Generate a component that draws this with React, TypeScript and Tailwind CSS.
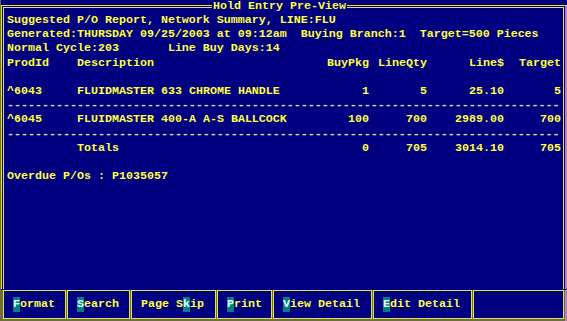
const rows = [
  ['^6043', 'FLUIDMASTER 633 CHROME HANDLE', '1', '5', '25.10', '5'],
  ['^6045', 'FLUIDMASTER 400-A A-S BALLCOCK', '100', '700', '2989.00', '700'],
];

const buttons = [
  { pre: '', key: 'F', post: 'ormat', w: 'w-[63px]' },
  { pre: '', key: 'S', post: 'earch', w: 'w-[63px]' },
  { pre: 'Page S', key: 'k', post: 'ip', w: 'w-[85px]' },
  { pre: '', key: 'P', post: 'rint', w: 'w-[55px]' },
  { pre: '', key: 'V', post: 'iew Detail', w: 'w-[99px]' },
  { pre: '', key: 'E', post: 'dit Detail', w: 'w-[99px]' },
  { pre: '', key: '', post: '', w: 'w-[91px]' },
];

function Row({ cells }: { cells: string[] }) {
  return (
    <div className="grid grid-cols-[70px_240px_52px_58px_77px_57px] whitespace-pre">
      <div>{cells[0]}</div>
      <div>{cells[1]}</div>
      <div className="text-right">{cells[2]}</div>
      <div className="text-right">{cells[3]}</div>
      <div className="text-right">{cells[4]}</div>
      <div className="text-right">{cells[5]}</div>
    </div>
  );
}

function Dashes() {
  return <div className="whitespace-pre text-[#e8e890]">{'-'.repeat(79)}</div>;
}

export default function App() {
  return (
    <div className="w-[567px] h-[321px] bg-[#000080] border-l border-[#6e6e46] flex flex-col overflow-hidden relative font-['Liberation_Mono',monospace] font-bold text-[11.66px] leading-[14.2px] text-[#ffff3c]">
      {/* title on top border */}
      <div className="absolute top-0 left-[211px] bg-[#000080] px-[1px] leading-[12px] whitespace-pre">
        Hold Entry Pre-View
      </div>

      {/* main frame */}
      <div className="mt-[5px] h-[284px] w-[566px] border-l border-t border-r-2 border-l-[#e4e445] border-t-[#e4e445] border-r-[#c080c0] pt-[1px] pl-[1px] pr-[1px]">
        <div className="h-full border-l border-t border-r border-[#e4e445] pl-[3px] pt-[5px]">
          <div className="whitespace-pre">Suggested P/O Report, Network Summary, LINE:FLU</div>
          <div className="whitespace-pre">Generated:THURSDAY 09/25/2003 at 09:12am  Buying Branch:1  Target=500 Pieces</div>
          <div className="whitespace-pre">Normal Cycle:203       Line Buy Days:14</div>
          <Row cells={['ProdId', 'Description', 'BuyPkg', 'LineQty', 'Line$', 'Target']} />
          <div className="h-[14.2px]" />
          <Row cells={rows[0]} />
          <Dashes />
          <Row cells={rows[1]} />
          <Dashes />
          <Row cells={['', 'Totals', '0', '705', '3014.10', '705']} />
          <div className="h-[14.2px]" />
          <div className="whitespace-pre">Overdue P/Os : P1035057</div>
        </div>
      </div>

      {/* function key bar */}
      <div className="mt-auto h-[31px] bg-[#6e6e46] flex gap-[1px] pl-[2px] pb-[2px] border-r-2 border-[#c080c0]">
        {buttons.map((b, i) => (
          <div
            key={i}
            className={`${b.w} h-[29px] bg-[#000080] border border-[#e4e445] pl-[9px] flex items-center whitespace-pre`}
          >
            {b.pre}
            {b.key && <span className="bg-[#008080] text-[#e8ffff]">{b.key}</span>}
            {b.post}
          </div>
        ))}
      </div>
    </div>
  );
}
